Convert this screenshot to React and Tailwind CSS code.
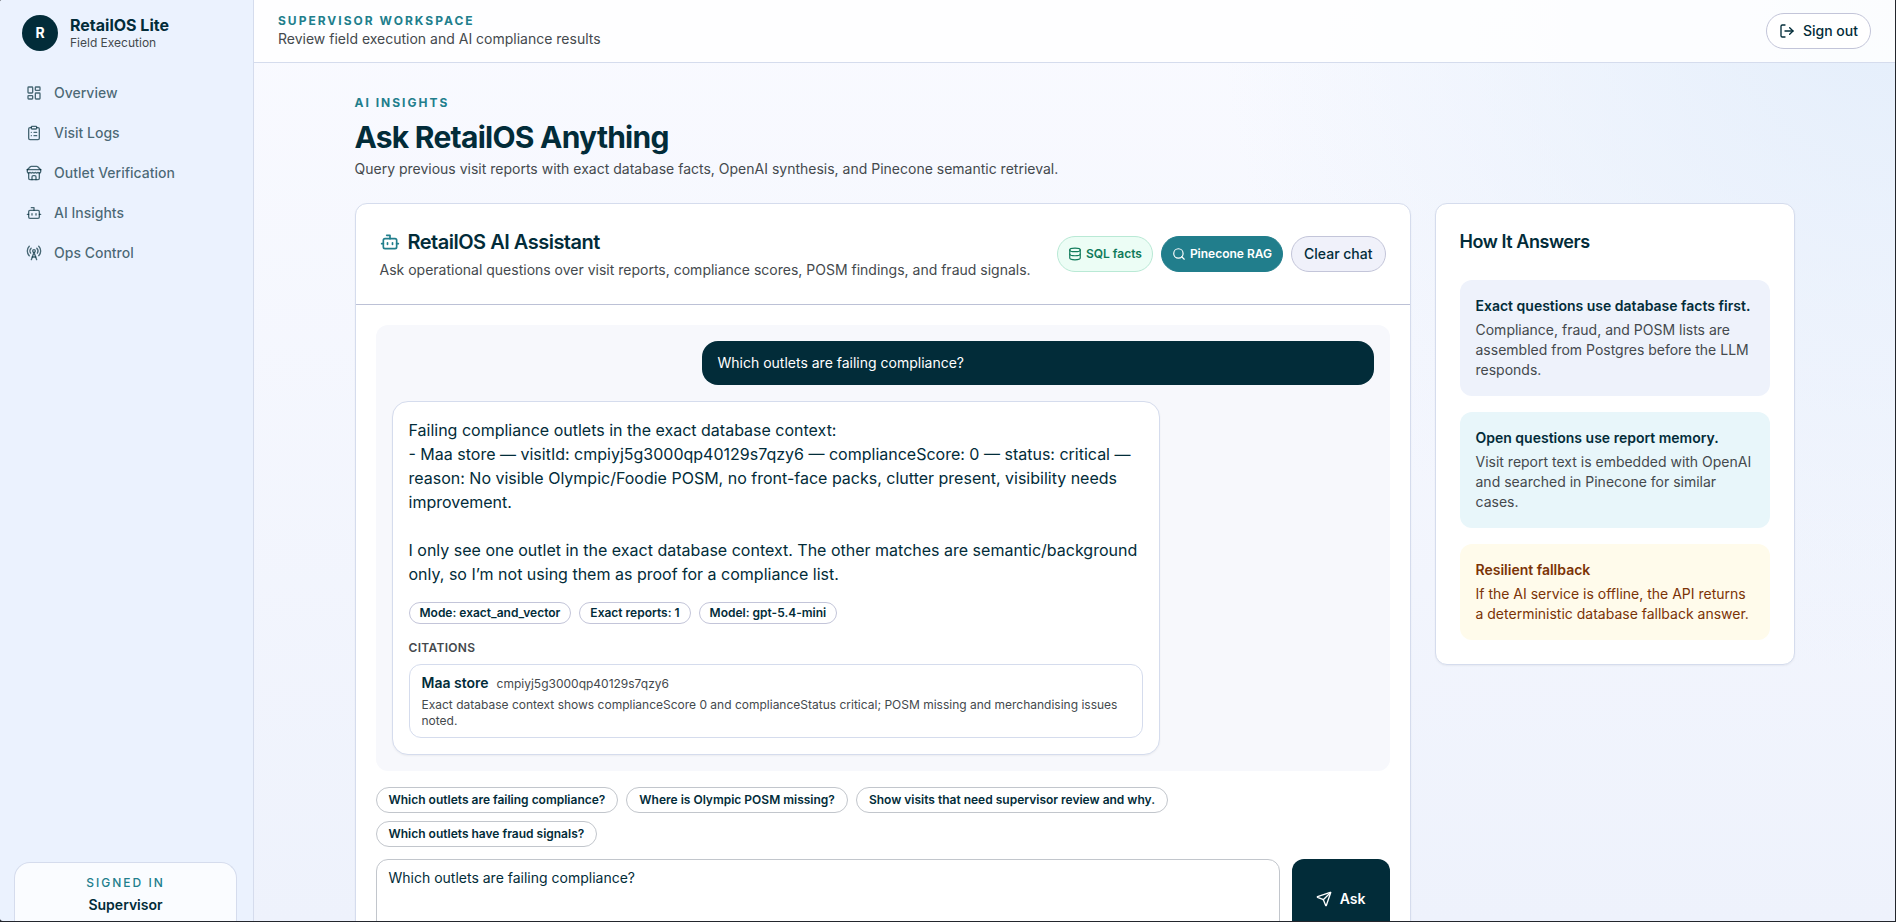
import React, { useState } from 'react';
import {
    Bot,
    ClipboardList,
    Database,
    LayoutDashboard,
    LogOut,
    RadioTower,
    Search,
    Send,
} from 'lucide-react';

const StoreIcon = ({ size = 24 }) => (
    <svg
        width={size}
        height={size}
        viewBox="0 0 24 24"
        fill="none"
        stroke="currentColor"
        strokeWidth="2"
        strokeLinecap="round"
        strokeLinejoin="round"
        aria-hidden="true"
    >
        <path d="m2 7 4.41-4.41A2 2 0 0 1 7.83 2h8.34a2 2 0 0 1 1.42.59L22 7" />
        <path d="M4 12v8a2 2 0 0 0 2 2h12a2 2 0 0 0 2-2v-8" />
        <path d="M15 22v-4a2 2 0 0 0-2-2h-2a2 2 0 0 0-2 2v4" />
        <path d="M2 7h20" />
        <path d="M22 7v3a2 2 0 0 1-2 2a2.7 2.7 0 0 1-1.59-.63.7.7 0 0 0-.82 0A2.7 2.7 0 0 1 16 12a2.7 2.7 0 0 1-1.59-.63.7.7 0 0 0-.82 0A2.7 2.7 0 0 1 12 12a2.7 2.7 0 0 1-1.59-.63.7.7 0 0 0-.82 0A2.7 2.7 0 0 1 8 12a2.7 2.7 0 0 1-1.59-.63.7.7 0 0 0-.82 0A2.7 2.7 0 0 1 4 12a2 2 0 0 1-2-2V7" />
    </svg>
);

const navItems = [
    { label: 'Overview', icon: LayoutDashboard },
    { label: 'Visit Logs', icon: ClipboardList },
    { label: 'Outlet Verification', icon: StoreIcon },
    { label: 'AI Insights', icon: Bot },
    { label: 'Ops Control', icon: RadioTower },
];

const suggestions = [
    'Which outlets are failing compliance?',
    'Where is Olympic POSM missing?',
    'Show visits that need supervisor review and why.',
    'Which outlets have fraud signals?',
];

const answer = `Failing compliance outlets in the exact database context:
- Maa store — visitId: cmpiyj5g3000qp40129s7qzy6 — complianceScore: 0 — status: critical — reason: No visible Olympic/Foodie POSM, no front-face packs, clutter present, visibility needs improvement.

I only see one outlet in the exact database context. The other matches are semantic/background only, so I’m not using them as proof for a compliance list.`;

const answerMeta = ['Mode: exact_and_vector', 'Exact reports: 1', 'Model: gpt-5.4-mini'];

const Sidebar = () => (
    <aside className="flex w-[254px] shrink-0 flex-col border-r border-[#d5dced] bg-[#ebf2fe] pl-[14px] pr-4 pt-[15px]">
        <div className="flex items-center gap-3 px-2">
            <div className="flex size-9 items-center justify-center rounded-full bg-[#022c39] text-sm font-bold text-white">
                R
            </div>
            <div>
                <p className="text-base leading-5 font-bold text-[#022c39]">RetailOS Lite</p>
                <p className="text-xs text-[#44494d]">Field Execution</p>
            </div>
        </div>

        <nav className="mt-6 flex flex-1 flex-col gap-1">
            {navItems.map(({ label, icon: Icon }) => (
                <a key={label} href="#" className="flex h-9 items-center gap-3 rounded-full px-3 text-sm font-medium text-[#022c39]/70">
                    <Icon size={16} />
                    {label}
                </a>
            ))}
        </nav>

        <div className="h-[59px] rounded-t-2xl border border-b-0 border-[#d5dced] bg-white/75 p-3 text-center">
            <p className="text-xs font-medium tracking-[2px] text-[#217e8c] uppercase">Signed in</p>
            <p className="mt-1 text-sm font-semibold text-[#022c39]">Supervisor</p>
        </div>
    </aside>
);

const Header = () => (
    <header className="flex items-center justify-between border-b border-[#d5dced] bg-white/85 px-6 py-[13px]">
        <div>
            <p className="text-xs font-bold tracking-[2px] text-[#217e8c] uppercase">Supervisor workspace</p>
            <p className="text-sm text-[#44494d]">Review field execution and AI compliance results</p>
        </div>
        <button className="flex h-9 items-center gap-2 rounded-full border border-[#c3c5d9] bg-white px-3 text-sm font-medium text-[#022c39]">
            <LogOut size={16} />
            Sign out
        </button>
    </header>
);

const Answer = () => (
    <div className="max-w-3xl rounded-2xl border border-[#d5dced] bg-white p-4 text-[#022c39] shadow-xs">
        <p className="text-base leading-6 whitespace-pre-wrap">{answer}</p>

        <div className="mt-4 flex flex-wrap gap-2">
            {answerMeta.map((item) => (
                <span key={item} className="rounded-full border border-[#c3c5d9] px-2.5 py-0.5 text-xs font-semibold">
                    {item}
                </span>
            ))}
        </div>

        <p className="mt-4 text-xs font-semibold tracking-wide text-[#44494d] uppercase">Citations</p>
        <div className="mt-2 rounded-xl border border-[#d5dced] px-3 py-2">
            <div className="flex items-baseline gap-2">
                <span className="text-sm font-semibold">Maa store</span>
                <span className="text-xs text-[#44494d]">cmpiyj5g3000qp40129s7qzy6</span>
            </div>
            <p className="mt-1 text-xs text-[#44494d]">
                Exact database context shows complianceScore 0 and complianceStatus critical; POSM missing and merchandising issues noted.
            </p>
        </div>
    </div>
);

const Assistant = () => {
    const [question, setQuestion] = useState(suggestions[0]);

    return (
        <section className="rounded-xl border border-[#d5dced] bg-white shadow-xs">
            <div className="flex items-center justify-between border-b border-[#bcc1d6] p-6">
                <div>
                    <h2 className="flex items-center gap-2 text-xl leading-7 font-semibold tracking-tight text-[#022c39]">
                        <Bot size={20} className="text-[#217e8c]" />
                        RetailOS AI Assistant
                    </h2>
                    <p className="mt-1 text-sm text-[#44494d]">
                        Ask operational questions over visit reports, compliance scores, POSM findings, and fraud signals.
                    </p>
                </div>
                <div className="flex gap-2">
                    <span className="flex h-9 items-center gap-1 rounded-full border border-[#b9e9d5] bg-[#ecfdf5] px-2.5 text-xs font-semibold text-[#0f7a5a]">
                        <Database size={14} />
                        SQL facts
                    </span>
                    <span className="flex h-9 items-center gap-1 rounded-full border border-[#217e8c] bg-[#217e8c] px-2.5 text-xs font-semibold text-white">
                        <Search size={14} />
                        Pinecone RAG
                    </span>
                    <button className="h-9 rounded-full border border-[#c3c5d9] bg-[#f0f1fa] px-3 text-sm font-medium text-[#022c39]">
                        Clear chat
                    </button>
                </div>
            </div>

            <div className="p-5">
                <div className="flex flex-col gap-4 rounded-xl bg-[#f7f8fc] p-4">
                    <div className="w-full max-w-2xl self-end rounded-2xl bg-[#022c39] px-4 py-3 text-sm text-white">
                        Which outlets are failing compliance?
                    </div>
                    <Answer />
                </div>

                <div className="mt-4 flex flex-wrap gap-2">
                    {suggestions.map((text) => (
                        <button
                            key={text}
                            onClick={() => setQuestion(text)}
                            className="rounded-full border border-[#c2c6cc] bg-white px-3 py-1 text-xs font-semibold text-[#022c39]"
                        >
                            {text}
                        </button>
                    ))}
                </div>

                <form className="mt-3 flex gap-3" onSubmit={(e) => e.preventDefault()}>
                    <textarea
                        aria-label="Question"
                        value={question}
                        onChange={(e) => setQuestion(e.target.value)}
                        className="h-20 flex-1 resize-none rounded-xl border border-[#c2c6cc] bg-white px-3 py-2 text-sm text-[#022c39]"
                    />
                    <button className="flex h-20 items-center gap-2 rounded-xl bg-[#022c39] px-6 text-sm font-semibold text-white">
                        <Send size={16} />
                        Ask
                    </button>
                </form>
            </div>
        </section>
    );
};

const HowItAnswers = () => (
    <section className="rounded-xl border border-[#d5dced] bg-white p-6 shadow-xs">
        <h2 className="text-lg leading-7 font-semibold tracking-tight text-[#022c39]">How It Answers</h2>
        <div className="mt-6 space-y-4 text-sm text-[#44494d]">
            <div className="rounded-xl bg-[#eef2fb] p-4">
                <p className="font-semibold text-[#022c39]">Exact questions use database facts first.</p>
                <p className="mt-1">Compliance, fraud, and POSM lists are assembled from Postgres before the LLM responds.</p>
            </div>
            <div className="rounded-xl bg-[#e8f6fa] p-4">
                <p className="font-semibold text-[#022c39]">Open questions use report memory.</p>
                <p className="mt-1">Visit report text is embedded with OpenAI and searched in Pinecone for similar cases.</p>
            </div>
            <div className="rounded-xl bg-[#fffbeb] p-4 text-[#7b3306]">
                <p className="font-semibold">Resilient fallback</p>
                <p className="mt-1">If the AI service is offline, the API returns a deterministic database fallback answer.</p>
            </div>
        </div>
    </section>
);

const App = () => {
    return (
        <div className="h-screen bg-[#23262d]">
            <div className="flex h-full overflow-hidden rounded-tl-xs rounded-bl-sm border-r border-b border-[#23262d] bg-[radial-gradient(circle_at_top_right,#e4eefb,transparent_32%),linear-gradient(180deg,#f9faff,#eef2fc)] font-['Inter',sans-serif]">
                <Sidebar />
                <div className="flex min-w-0 flex-1 flex-col">
                    <Header />
                    <main className="flex-1 overflow-y-auto px-6 py-8 [scrollbar-width:none]">
                        <div className="mx-auto max-w-[1440px]">
                            <p className="text-xs font-bold tracking-[2px] text-[#217e8c] uppercase">AI Insights</p>
                            <h1 className="mt-2 text-3xl leading-9 font-bold tracking-tight text-[#022c39]">Ask RetailOS Anything</h1>
                            <p className="mt-1 text-sm text-[#44494d]">
                                Query previous visit reports with exact database facts, OpenAI synthesis, and Pinecone semantic retrieval.
                            </p>
                            <div className="mt-6 grid grid-cols-[minmax(0,1fr)_360px] items-start gap-6">
                                <Assistant />
                                <HowItAnswers />
                            </div>
                        </div>
                    </main>
                </div>
            </div>
        </div>
    );
};

export default App;
